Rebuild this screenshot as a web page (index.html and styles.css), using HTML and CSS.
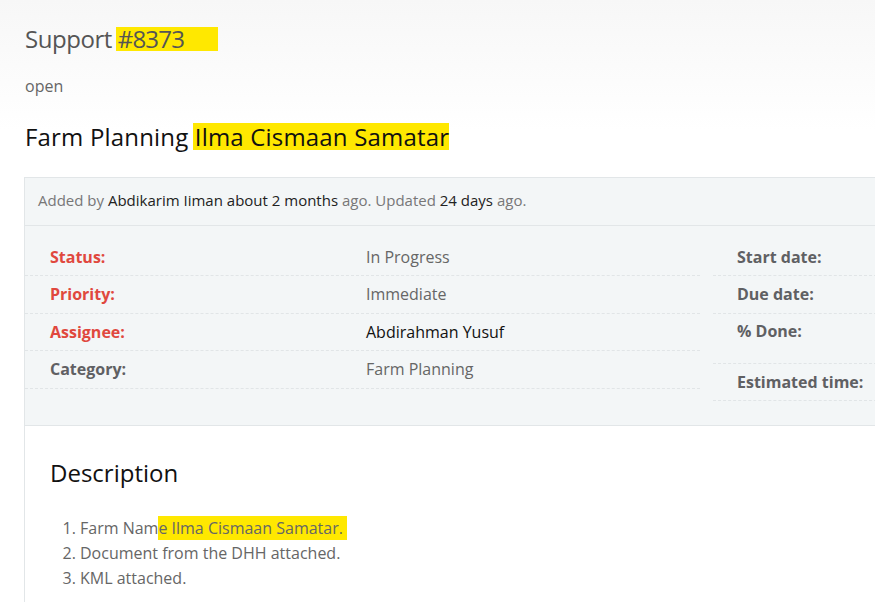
FILE: index.html
```html
<!DOCTYPE html>
<html>
<head>
<meta charset="utf-8">
<link rel="stylesheet" href="styles.css">
</head>
<body>
<div class="page">
  <h2 class="issue-id">Support <span class="mark mark-id">#8373</span></h2>
  <p class="state">open</p>
  <h3 class="subject">Farm Planning <span class="mark mark-subject">Ilma Cismaan Samatar</span></h3>

  <div class="issue-box">
    <div class="author">Added by <a>Abdikarim Iiman</a> <a>about 2 months</a> ago. Updated <a>24 days</a> ago.</div>
    <div class="attributes">
      <div class="attr-col left-col">
        <div class="attr-row"><span class="label red">Status:</span><span class="value">In Progress</span></div>
        <div class="attr-row"><span class="label red">Priority:</span><span class="value">Immediate</span></div>
        <div class="attr-row"><span class="label red">Assignee:</span><span class="value link">Abdirahman Yusuf</span></div>
        <div class="attr-row"><span class="label">Category:</span><span class="value">Farm Planning</span></div>
      </div>
      <div class="attr-col right-col">
        <div class="attr-row"><span class="label">Start date:</span></div>
        <div class="attr-row"><span class="label">Due date:</span></div>
        <div class="attr-row tall"><span class="label">% Done:</span></div>
        <div class="attr-row"><span class="label">Estimated time:</span></div>
      </div>
    </div>
    <div class="description">
      <h3 class="desc-title">Description</h3>
      <ol class="desc-list">
        <li>Farm Nam<span class="mark mark-li">e Ilma Cismaan Samatar.</span></li>
        <li>Document from the DHH attached.</li>
        <li>KML attached.</li>
      </ol>
    </div>
  </div>
</div>
</body>
</html>
```

FILE: styles.css
```css
html, body {
  margin: 0;
  padding: 0;
}
body {
  font-family: "Open Sans", "Liberation Sans", sans-serif;
  background: linear-gradient(#f7f7f7 0, #ffffff 130px) no-repeat;
  overflow: hidden;
  width: 875px;
  height: 602px;
}
.page {
  padding-left: 25px;
}
.issue-id {
  margin: 24px 0 0;
  font-size: 24px;
  line-height: 29px;
  font-weight: 400;
  color: #555;
  letter-spacing: -0.45px;
}
.mark {
  background: #ffe800;
  display: inline-block;
}
.mark-id {
  line-height: 24px;
  padding: 0 34px 0 2px;
  margin-left: -2px;
  letter-spacing: -0.8px;
}
.state {
  margin: 22px 0 0;
  font-size: 16px;
  line-height: 22px;
  color: #666;
}
.subject {
  margin: 25px 0 0;
  font-size: 24px;
  line-height: 30px;
  font-weight: 400;
  color: #111;
  letter-spacing: 0.18px;
}
.mark-subject {
  line-height: 27px;
  padding: 0 0 0 2px;
  margin-left: -2px;
}
.issue-box {
  margin-top: 25px;
  margin-left: -1px;
  width: 1100px;
  border: 1px solid #e2e6e8;
  border-right: none;
  background: #f3f6f7;
}
.author {
  padding: 11px 13px 13px;
  font-size: 15px;
  line-height: 23px;
  color: #777;
  border-bottom: 1px solid #e2e6e8;
}
.author a {
  color: #222;
}
.attributes {
  display: flex;
  gap: 13px;
  padding: 12px 0 24px;
  border-bottom: 1px solid #e2e6e8;
}
.left-col {
  width: 675px;
}
.right-col {
  width: 300px;
}
.attr-row {
  display: flex;
  align-items: center;
  height: 37.5px;
  border-bottom: 1px dashed #e1e5e7;
  font-size: 16px;
  box-sizing: border-box;
}
.attr-row:first-child {
  height: 38px;
}
.attr-row.tall {
  height: 50px;
  align-items: flex-start;
  padding-top: 6px;
}
.label {
  font-weight: 700;
  color: #5f6063;
  padding-left: 25px;
  width: 341px;
  box-sizing: border-box;
  flex: none;
}
.right-col .label {
  padding-left: 24px;
}
.label.red {
  color: #e0483e;
}
.value {
  color: #666;
}
.value.link {
  color: #111;
}
.description {
  background: #fff;
  padding: 30px 25px 20px;
}
.desc-title {
  margin: 0;
  font-size: 24px;
  line-height: 34px;
  font-weight: 400;
  color: #111;
}
.desc-list {
  margin: 26px 0 0;
  padding-left: 30px;
  font-size: 16px;
  line-height: 25px;
  color: #666;
}
.mark-li {
  line-height: 24px;
  padding-right: 4px;
}
```
